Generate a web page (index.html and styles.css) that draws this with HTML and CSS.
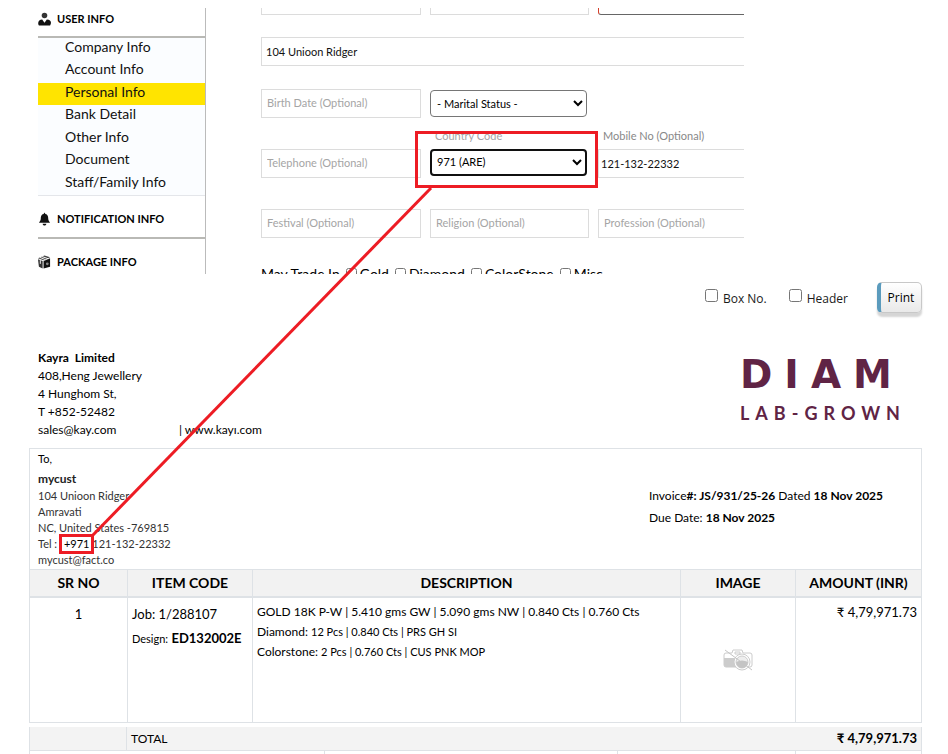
FILE: index.html
```html
<!DOCTYPE html>
<html lang="en">
<head>
    <meta charset="UTF-8">
    <meta name="viewport" content="width=device-width, initial-scale=1.0">
    <title>Personal Info - Invoice Print</title>
    <link rel="stylesheet" href="styles.css">
</head>
<body>
    <div class="profile">
        <nav class="sidebar">
            <h3 class="menu-title first">
                <svg class="icon" viewBox="0 0 14 14"><circle cx="7" cy="3.3" r="3" fill="#333"/><path d="M1 14c-2-3 0-6.500 3.500-6.500L7 11l2.500-3.500C14 7.500 15 11 13 14z" fill="#111"/></svg>
                USER INFO
            </h3>
            <ul class="menu">
                <li><a href="#">Company Info</a></li>
                <li><a href="#">Account Info</a></li>
                <li class="active"><a href="#">Personal Info</a></li>
                <li><a href="#">Bank Detail</a></li>
                <li><a href="#">Other Info</a></li>
                <li><a href="#">Document</a></li>
                <li><a href="#">Staff/Family Info</a></li>
            </ul>
            <h3 class="menu-title">
                <svg class="icon" viewBox="0 0 14 14"><path d="M7 0l1 1.500c2.500.5 3 2.500 3 5 0 2 1 3 2 4.500H1c1-1.500 2-2.500 2-4.500 0-2.500.5-4.500 3-5zM5 12h4c0 2.500-4 2.500-4 0z" fill="#111"/></svg>
                NOTIFICATION INFO
            </h3>
            <h3 class="menu-title">
                <svg class="icon" viewBox="0 0 14 14"><path d="M0 3l7-3 6 2-7 3z" fill="#444"/><path d="M0 4l5 2v8l-4-2z" fill="#333"/><path d="M6 6l7-3v9l-7 2z" fill="#111"/><path d="M2 2l6 2.500M4 1l7 2.500M2.500 5v4" stroke="#fff" fill="none"/><circle cx="10" cy="9" r="1.500" fill="#888"/></svg>
                PACKAGE INFO
            </h3>
        </nav>

        <form class="form">
            <div class="row cut">
                <input class="field" type="text" aria-label="First name">
                <input class="field" type="text" aria-label="Last name">
                <input class="field invalid" type="text" aria-label="City">
            </div>
            <div class="row">
                <input class="field wide filled" type="text" aria-label="Address" value="104 Unioon Ridger">
            </div>
            <div class="row">
                <input class="field" type="text" aria-label="Birth Date" placeholder="Birth Date (Optional)">
                <select class="select" aria-label="Marital Status">
                    <option>- Marital Status -</option>
                </select>
            </div>
            <div class="row labelled">
                <input class="field" type="text" aria-label="Telephone" placeholder="Telephone (Optional)">
                <div class="group">
                    <label for="code">Country Code</label>
                    <select class="select focused" id="code">
                        <option>971 (ARE)</option>
                    </select>
                </div>
                <div class="group">
                    <label class="dark" for="mobile">Mobile No (Optional)</label>
                    <input class="field mobile" type="text" id="mobile" value="121-132-22332">
                </div>
            </div>
            <div class="row last">
                <input class="field" type="text" aria-label="Festival" placeholder="Festival (Optional)">
                <input class="field" type="text" aria-label="Religion" placeholder="Religion (Optional)">
                <input class="field" type="text" aria-label="Profession" placeholder="Profession (Optional)">
            </div>
            <div class="trade">
                <span>May Trade In</span>
                <label><input type="checkbox"> Gold</label>
                <label><input type="checkbox"> Diamond</label>
                <label><input type="checkbox"> ColorStone</label>
                <label><input type="checkbox"> Misc</label>
            </div>
        </form>
    </div>

    <div class="toolbar">
        <label><input type="checkbox"> <span>Box No.</span></label>
        <label><input type="checkbox"> <span>Header</span></label>
        <button class="print" type="button">Print</button>
    </div>

    <div class="company">
        <div class="address">
            <strong>Kayra&nbsp; Limited</strong><br>
            408,Heng Jewellery<br>
            4 Hunghom St,<br>
            T +852-52482<br>
            <div class="contact"><span class="mail">sales@kay.com</span><span>| www.kayı.com</span></div>
        </div>
        <div class="logo">
            <div class="logo-name">DIAM</div>
            <div class="logo-sub">LAB-GROWN</div>
        </div>
    </div>

    <div class="invoice">
        <div class="parties">
            <div class="customer">
                <p class="to">To,</p>
                <p class="name">mycust</p>
                <p>104 Unioon Ridger</p>
                <p>Amravati</p>
                <p>NC, United States -769815</p>
                <p>Tel : <span class="code">+971</span> 121-132-22332</p>
                <p>mycust@fact.co</p>
            </div>
            <div class="dates">
                <p>Invoice<strong>#: JS/931/25-26</strong> Dated <strong>18 Nov 2025</strong></p>
                <p>Due Date: <strong>18 Nov 2025</strong></p>
            </div>
        </div>

        <table class="items">
            <colgroup>
                <col class="col-sr"><col class="col-code"><col><col class="col-image"><col class="col-amount">
            </colgroup>
            <thead>
                <tr>
                    <th>SR NO</th>
                    <th>ITEM CODE</th>
                    <th>DESCRIPTION</th>
                    <th>IMAGE</th>
                    <th>AMOUNT (INR)</th>
                </tr>
            </thead>
            <tbody>
                <tr>
                    <td class="sr">1</td>
                    <td class="item">Job: 1/288107<br><small>Design:</small> <strong>ED132002E</strong></td>
                    <td class="desc">
                        <p>GOLD 18K P-W | 5.410 gms GW | 5.090 gms NW | 0.840 Cts | 0.760 Cts</p>
                        <p>Diamond: <small>12 Pcs | 0.840 Cts | PRS GH SI</small></p>
                        <p>Colorstone: <small>2 Pcs | 0.760 Cts | CUS PNK MOP</small></p>
                    </td>
                    <td class="image">
                        <svg class="camera" viewBox="0 0 30 22"><path d="M1 6q0-2 2-2h6l1-3h9l1 3h7q2 0 2 2v10q0 2-2 2H3q-2 0-2-2z" fill="#fff" stroke="#ccc"/><path d="M1 9h11v9H3q-2 0-2-2z" fill="#ccc"/><path d="M12 3h5v2h-5z" fill="none" stroke="#ccc"/><circle cx="19" cy="13" r="8" fill="#fff" stroke="#ccc"/><circle cx="19" cy="13" r="6" fill="#eee" stroke="#ccc"/><path d="M13 13q6-3 12 0q-1 6-6 6t-6-6z" fill="#c4c4c4"/><path d="M2 1l27 20" stroke="#c4c4c4"/></svg>
                    </td>
                    <td class="amount">₹ 4,79,971.73</td>
                </tr>
            </tbody>
        </table>
    </div>

    <div class="total">
        <span class="total-blank"></span>
        <span class="total-label">TOTAL</span>
        <strong class="total-amount">₹ 4,79,971.73</strong>
    </div>
    <div class="summary">
        <span></span><span></span><span></span><span></span>
    </div>

    <!-- country code marker -->
    <svg class="marker" width="948" height="600" viewBox="0 0 948 600">
        <g fill="none" stroke="#ed1c24" stroke-width="3">
            <rect x="416.500" y="132.500" width="180" height="54"/>
            <rect x="60.500" y="535.500" width="32" height="17"/>
            <path d="M431 188L93 535"/>
        </g>
    </svg>
</body>
</html>
```
FILE: styles.css
```css
* {
    box-sizing: border-box;
}
body {
    margin: 0;
    position: relative;
    background: #fff;
    color: #000;
    font-family: Lato, "Noto Sans", sans-serif;
    font-size: 12px;
}
p {
    margin: 0;
}

/* profile screen */
.profile {
    display: flex;
    gap: 55px;
    margin: 8px 204px 0 38px;
    height: 266px;
}
.sidebar {
    flex: 0 0 168px;
    border-right: 1px solid #bbb;
    overflow: hidden;
}
.menu-title {
    display: flex;
    align-items: center;
    gap: 6px;
    margin: 0;
    padding: 13px 0 8px;
    border-bottom: 2px solid #b9b9b5;
    font-size: 11px;
    font-weight: bold;
    line-height: 20px;
}
.menu-title.first {
    padding: 1px 0 7px;
}
.icon {
    width: 13px;
    height: 14px;
}
.menu {
    display: grid;
    grid-auto-rows: 1fr;
    height: 158px;
    margin: 0;
    padding: 0;
    list-style: none;
    background: #fbfdff;
    border-bottom: 1px solid #e4e6ea;
}
.menu a {
    display: block;
    padding-left: 27px;
    color: #111;
    font-size: 14px;
    line-height: 18px;
    text-decoration: none;
}
.menu .active {
    background: #ffe400;
}

.form {
    flex: 1;
    min-width: 0;
    overflow: hidden;
}
.row {
    display: grid;
    grid-template-columns: 160px 159px 170px;
    grid-auto-rows: 100%;
    gap: 9px;
    height: 29px;
    margin-bottom: 23px;
}
.cut {
    height: 7px;
    margin-bottom: 22px;
}
.labelled {
    margin: 31px 0;
}
.last {
    margin-bottom: 26px;
}
.field {
    width: 100%;
    height: 100%;
    padding: 0 5px 3px;
    border: 1px solid #dcdcdc;
    background: #fff;
    color: #111;
    font-family: inherit;
    font-size: 11px;
}
.field::placeholder {
    color: #a5a5a5;
}
.filled {
    padding: 0 4px 1px;
}
.mobile {
    padding: 0 2px 1px;
}
.wide {
    grid-column: 1 / 4;
}
.cut .field {
    border-top: 0;
    padding: 0;
}
.cut .invalid {
    border-color: #666;
    border-left-color: #d43f2a;
    border-radius: 0 0 3px 3px;
}
.select {
    align-self: center;
    width: 157px;
    height: 27px;
    padding: 0 2px;
    border: 1px solid #767676;
    border-radius: 4px;
    background: #fff;
    color: #000;
    font-family: inherit;
    font-size: 11px;
}
.focused {
    border: 2px solid #101010;
    padding: 0 1px 2px;
}
.group {
    position: relative;
}
.group label {
    position: absolute;
    left: 5px;
    bottom: 34px;
    color: #a5a5a5;
    font-size: 11px;
    line-height: 16px;
}
.group .dark {
    color: #888;
}
.trade {
    display: flex;
    gap: 6px;
    font-size: 14px;
    line-height: 20px;
}
.trade label {
    display: flex;
}
.trade input {
    width: 11px;
    height: 11px;
    margin: 4px 3px 0 0;
}

/* print options */
.toolbar {
    display: flex;
    justify-content: flex-end;
    gap: 22px;
    margin: 8px 26px 0 0;
    font-family: "Open Sans", sans-serif;
    color: #1a1a1a;
}
.toolbar label {
    display: flex;
    gap: 5px;
    line-height: 33px;
}
.toolbar input {
    width: 13px;
    height: 13px;
    margin: 7px 0 0;
}
.print {
    width: 45px;
    height: 31px;
    margin-left: 7px;
    padding: 0;
    border: 1px solid #c8c8c8;
    border-left: 4px solid #5b9bbd;
    border-radius: 5px;
    background: linear-gradient(#fff, #e9e9e9);
    box-shadow: 0 4px 2px #d5d5d5;
    font-family: inherit;
    font-size: 12px;
}

/* invoice */
.company {
    display: flex;
    justify-content: space-between;
    margin: 34px 45px 0 38px;
}
.address {
    line-height: 18px;
}
.contact {
    display: flex;
}
.mail {
    width: 141px;
}
.logo {
    width: 163px;
    overflow: hidden;
    color: #602445;
    white-space: nowrap;
}
.logo-name {
    margin-top: 4px;
    font-family: "DejaVu Sans", sans-serif;
    font-size: 39px;
    font-weight: bold;
    line-height: 44px;
    letter-spacing: 12px;
}
.logo-sub {
    margin-top: 6px;
    font-size: 18px;
    font-weight: bold;
    line-height: 20px;
    letter-spacing: 6px;
}
.invoice {
    margin: 9px 26px 0 29px;
}
.parties {
    display: flex;
    height: 121px;
    border: 1px solid #dee2e6;
    border-bottom: 0;
}
.customer {
    flex: 1;
    padding: 0 8px;
    color: #333;
    font-size: 11px;
    line-height: 16px;
}
.customer .to {
    color: #000;
    line-height: 20px;
}
.customer .name {
    color: #222;
    font-size: 12px;
    font-weight: bold;
    line-height: 19px;
}
.code {
    margin-left: 4px;
    color: #000;
}
.dates {
    width: 272px;
    padding-top: 36px;
    line-height: 22px;
}
.items {
    width: 100%;
    border-collapse: collapse;
    table-layout: fixed;
}
.col-sr {
    width: 98px;
}
.col-code {
    width: 125px;
}
.col-image {
    width: 115px;
}
.col-amount {
    width: 126px;
}
.items th,
.items td {
    border: 1px solid #dee2e6;
    padding: 0 4px;
}
.items th {
    height: 27px;
    border-bottom-width: 2px;
    background: #f2f2f2;
    font-size: 14px;
    line-height: 24px;
}
.items td {
    height: 126px;
    padding-top: 4px;
    vertical-align: top;
}
.items small {
    font-size: 11px;
}
.items .sr {
    font-size: 13px;
    line-height: 24px;
    text-align: center;
}
.items .item {
    font-size: 13px;
    line-height: 24px;
    white-space: nowrap;
}
.desc {
    line-height: 20px;
}
.items .image {
    text-align: center;
    vertical-align: middle;
}
.camera {
    width: 30px;
    height: 22px;
}
.amount {
    font-size: 13px;
    line-height: 20px;
    text-align: right;
}
.total {
    display: flex;
    margin: 4px 26px 0 29px;
    border: 1px solid #dee2e6;
    border-width: 0 1px 1px;
    background: #f3f3f3;
    line-height: 23px;
}
.total-blank {
    width: 97px;
    border-right: 1px solid #dee2e6;
}
.total-label {
    flex: 1;
    padding-left: 4px;
}
.total-amount {
    padding-right: 4px;
    font-size: 13px;
}
.summary {
    display: grid;
    grid-template-columns: 295fr 294fr 178fr 126fr;
    height: 3px;
    margin: 0 26px 0 29px;
    border-left: 1px solid #dee2e6;
}
.summary span {
    border-right: 1px solid #dee2e6;
}

.marker {
    position: absolute;
    top: 0;
    left: 0;
    pointer-events: none;
}
```
